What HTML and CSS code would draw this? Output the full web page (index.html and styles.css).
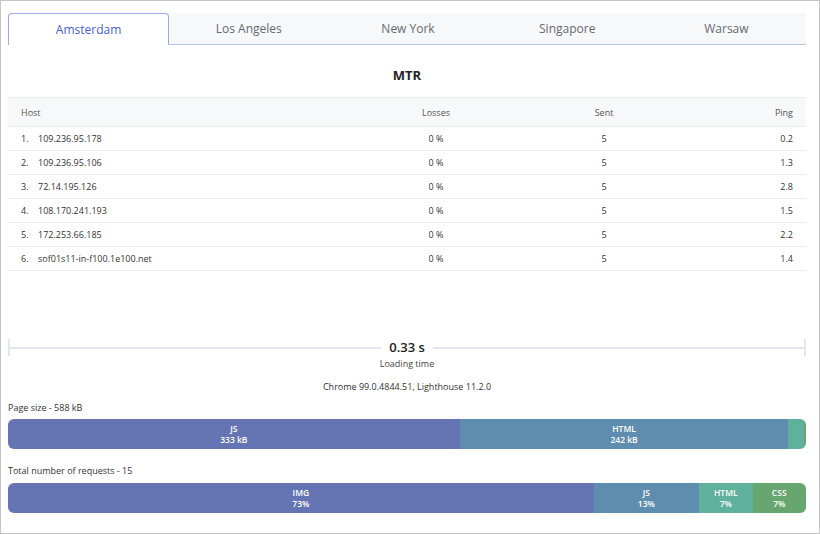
FILE: index.html
```html
<!DOCTYPE html>
<html lang="en">
<head>
<meta charset="utf-8">
<title>MTR</title>
<link rel="stylesheet" href="styles.css">
</head>
<body>
<div class="frame">
  <div class="tabs">
    <div class="tab active">Amsterdam</div>
    <div class="tab">Los Angeles</div>
    <div class="tab">New York</div>
    <div class="tab">Singapore</div>
    <div class="tab">Warsaw</div>
  </div>

  <h2 class="title">MTR</h2>

  <div class="mtr">
    <div class="row head">
      <div class="c-host">Host</div>
      <div class="c-mid">Losses</div>
      <div class="c-mid">Sent</div>
      <div class="c-ping">Ping</div>
    </div>
    <div class="row">
      <div class="c-host"><span class="num">1.</span>109.236.95.178</div>
      <div class="c-mid">0 %</div><div class="c-mid">5</div><div class="c-ping">0.2</div>
    </div>
    <div class="row">
      <div class="c-host"><span class="num">2.</span>109.236.95.106</div>
      <div class="c-mid">0 %</div><div class="c-mid">5</div><div class="c-ping">1.3</div>
    </div>
    <div class="row">
      <div class="c-host"><span class="num">3.</span>72.14.195.126</div>
      <div class="c-mid">0 %</div><div class="c-mid">5</div><div class="c-ping">2.8</div>
    </div>
    <div class="row">
      <div class="c-host"><span class="num">4.</span>108.170.241.193</div>
      <div class="c-mid">0 %</div><div class="c-mid">5</div><div class="c-ping">1.5</div>
    </div>
    <div class="row">
      <div class="c-host"><span class="num">5.</span>172.253.66.185</div>
      <div class="c-mid">0 %</div><div class="c-mid">5</div><div class="c-ping">2.2</div>
    </div>
    <div class="row">
      <div class="c-host"><span class="num">6.</span>sof01s11-in-f100.1e100.net</div>
      <div class="c-mid">0 %</div><div class="c-mid">5</div><div class="c-ping">1.4</div>
    </div>
  </div>

  <div class="rule">
    <span class="rule-line"></span>
    <span class="rule-value">0.33 s</span>
    <span class="rule-line end"></span>
  </div>
  <div class="rule-sub">Loading time</div>
  <div class="browser">Chrome 99.0.4844.51, Lighthouse 11.2.0</div>

  <div class="label">Page size - 588 kB</div>
  <div class="bar">
    <div class="seg js" style="width:56.6%"><span class="seg-name">JS</span><span class="seg-val">333 kB</span></div>
    <div class="seg html" style="width:41.2%"><span class="seg-name">HTML</span><span class="seg-val">242 kB</span></div>
    <div class="seg img2" style="width:2%"></div>
    <div class="seg css" style="width:0.2%"></div>
  </div>

  <div class="label label-req">Total number of requests - 15</div>
  <div class="bar">
    <div class="seg js" style="width:73.4%"><span class="seg-name">IMG</span><span class="seg-val">73%</span></div>
    <div class="seg html" style="width:13.2%"><span class="seg-name">JS</span><span class="seg-val">13%</span></div>
    <div class="seg img2" style="width:6.7%"><span class="seg-name">HTML</span><span class="seg-val">7%</span></div>
    <div class="seg css" style="width:6.7%"><span class="seg-name">CSS</span><span class="seg-val">7%</span></div>
  </div>
</div>
</body>
</html>
```

FILE: styles.css
```css
* { box-sizing: border-box; }

html, body {
  margin: 0;
  padding: 0;
  background: #ffffff;
}

body {
  font-family: "Open Sans", "Noto Sans", sans-serif;
  color: #333333;
}

.frame {
  width: 820px;
  height: 534px;
  border: 1px solid #c4c4c4;
  padding: 12px 13px 0 7px;
  overflow: hidden;
}

/* Tabs */
.tabs {
  display: flex;
  height: 32px;
  background: #f7f8fa;
  border-bottom: 1px solid #b7c2ef;
}

.tab {
  flex: 1 1 0;
  display: flex;
  align-items: center;
  justify-content: center;
  font-size: 12px;
  color: #666a70;
}

.tab.active {
  background: #ffffff;
  color: #4561d8;
  border: 1px solid #9aaaea;
  border-bottom: none;
  border-radius: 4px 4px 0 0;
  margin-bottom: -1px;
}

/* Title */
.title {
  margin: 20px 0 12px;
  height: 20px;
  line-height: 20px;
  text-align: center;
  font-size: 13px;
  font-weight: 700;
  color: #222222;
}

/* MTR table */
.mtr {
  border-top: 1px solid #e8eaf0;
}

.row {
  display: grid;
  grid-template-columns: 344px 168px 168px 1fr;
  align-items: center;
  height: 24px;
  border-bottom: 1px solid #e8eaf0;
  font-size: 9px;
  color: #333333;
}

.row.head {
  height: 29px;
  background: #f7f8fa;
  color: #555555;
}

.c-host { padding-left: 13px; white-space: nowrap; }
.c-mid { text-align: center; }
.c-ping { text-align: right; padding-right: 13px; }

.num {
  display: inline-block;
  width: 17px;
}

/* Loading time rule */
.rule {
  display: flex;
  align-items: center;
  height: 17px;
  margin-top: 68px;
  border-left: 2px solid #e3e6ee;
  border-right: 2px solid #e3e6ee;
}

.rule-line {
  flex: 1 1 0;
  height: 2px;
  background: #e3e6ee;
}

.rule-value {
  padding: 0 8px;
  font-size: 13px;
  font-weight: 600;
  color: #222222;
  line-height: 17px;
}

.rule-sub {
  margin-top: 2px;
  text-align: center;
  font-size: 9px;
  line-height: 12px;
  color: #444444;
}

.browser {
  margin-top: 11px;
  text-align: center;
  font-size: 9px;
  line-height: 12px;
  color: #333333;
}

.label {
  margin-top: 9px;
  font-size: 9px;
  line-height: 12px;
  color: #333333;
}

.label.label-req { margin-top: 16px; }

/* Bars */
.bar {
  display: flex;
  height: 30px;
  margin-top: 5px;
  border-radius: 6px;
  overflow: hidden;
}

.label-req + .bar { margin-top: 6px; }

.seg {
  display: flex;
  flex-direction: column;
  align-items: center;
  justify-content: center;
  text-align: center;
  color: #ffffff;
  font-size: 8.5px;
  line-height: 11.5px;
  font-weight: 600;
}

.seg-name,
.seg-val {
  display: block;
  height: 11px;
}

.seg.js { background: #6574b3; }
.seg.html { background: #5f8db0; }
.seg.img2 { background: #5fb09d; }
.seg.css { background: #67a76f; }
```
